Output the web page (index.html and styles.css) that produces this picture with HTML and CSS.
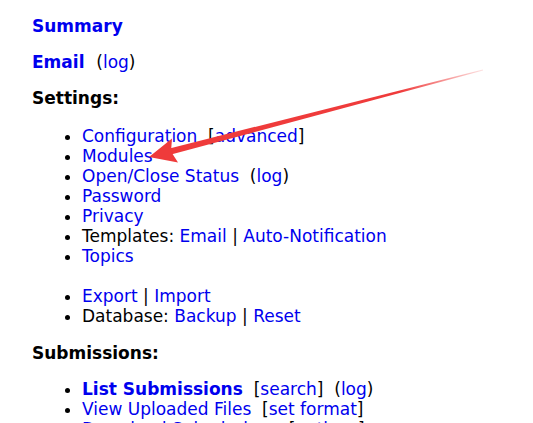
FILE: index.html
```html
<!DOCTYPE html>
<html>
<head>
<meta charset="utf-8">
<link rel="stylesheet" href="styles.css">
</head>
<body>
<div class="page">
  <p class="head"><a href="#">Summary</a></p>
  <p class="head"><a href="#">Email</a>&nbsp; <span class="plain">(<a href="#">log</a>)</span></p>
  <p class="head">Settings:</p>
  <ul class="list">
    <li><a href="#">Configuration</a>&nbsp; [<a href="#">advanced</a>]</li>
    <li><a href="#">Modules</a></li>
    <li><a href="#">Open/Close Status</a>&nbsp; (<a href="#">log</a>)</li>
    <li><a href="#">Password</a></li>
    <li><a href="#">Privacy</a></li>
    <li>Templates: <a href="#">Email</a> | <a href="#">Auto-Notification</a></li>
    <li><a href="#">Topics</a></li>
    <li class="spacer"></li>
    <li><a href="#">Export</a> | <a href="#">Import</a></li>
    <li>Database: <a href="#">Backup</a> | <a href="#">Reset</a></li>
  </ul>
  <p class="head">Submissions:</p>
  <ul class="list list-tight">
    <li><a href="#" class="strong">List Submissions</a>&nbsp; [<a href="#">search</a>]&nbsp; (<a href="#">log</a>)</li>
    <li><a href="#">View Uploaded Files</a>&nbsp; [<a href="#">set format</a>]</li>
    <li><a href="#">Download Submissions</a>&nbsp; [<a href="#">options</a>]</li>
  </ul>
</div>
<svg class="arrow" width="533" height="423" viewBox="0 0 533 423">
  <defs>
    <linearGradient id="fade" gradientUnits="userSpaceOnUse" x1="483" y1="70" x2="400" y2="92">
      <stop offset="0" stop-color="#ef3b3b" stop-opacity="0.15"/>
      <stop offset="1" stop-color="#ef3b3b" stop-opacity="1"/>
    </linearGradient>
  </defs>
  <polygon fill="url(#fade)" points="483.1,70.5 482.9,69.5 169.5,148.4 171.1,154.6"/>
  <polygon fill="#ef3b3b" points="149,157 172,138.5 171,151.5 178,162.5"/>
</svg>
</body>
</html>
```
FILE: styles.css
```css
html, body {
  margin: 0;
  padding: 0;
  background: #ffffff;
}
body {
  font-family: "DejaVu Sans", Verdana, sans-serif;
  font-size: 17px;
  line-height: 20px;
  color: #000000;
}
.page {
  padding: 16px 32px 0 32px;
}
a {
  color: #0000ee;
  text-decoration: none;
}
.head {
  margin: 0 0 16px 0;
  font-weight: bold;
}
.plain {
  font-weight: normal;
}
.list {
  margin: 18px 0 17px 0;
  padding-left: 50px;
}
.list-tight {
  margin-top: 16px;
}
.list li {
  height: 20px;
}
.list li.spacer {
  list-style: none;
}
.strong {
  font-weight: bold;
}
.arrow {
  position: absolute;
  left: 0;
  top: 0;
  pointer-events: none;
}
```
